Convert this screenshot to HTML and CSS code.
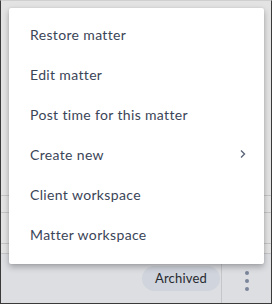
FILE: index.html
```html
<!DOCTYPE html>
<html lang="en">
<head>
    <meta charset="UTF-8">
    <title>Matter actions</title>
    <link rel="stylesheet" href="styles.css">
</head>
<body>
    <div class="frame">
        <div class="table">
            <div class="row row_top"></div>
            <div class="row row_a"></div>
            <div class="row row_b"></div>
            <div class="row row_c"></div>
            <div class="row row_last">
                <div class="cell_status">
                    <span class="pill">Archived</span>
                </div>
                <div class="cell_more">
                    <span class="kebab"><i></i><i></i><i></i></span>
                </div>
            </div>
        </div>

        <ul class="menu">
            <li><a href="#">Restore matter</a></li>
            <li><a href="#">Edit matter</a></li>
            <li><a href="#">Post time for this matter</a></li>
            <li>
                <a href="#" class="has_sub">Create new
                    <svg width="8" height="10" viewBox="0 0 8 10"><path d="M2 1.5 L5.5 5 L2 8.5" fill="none" stroke="#5b6578" stroke-width="1.4"/></svg>
                </a>
            </li>
            <li><a href="#">Client workspace</a></li>
            <li><a href="#">Matter workspace</a></li>
        </ul>
    </div>
</body>
</html>
```

FILE: styles.css
```css
*{
    padding: 0;
    margin: 0;
    box-sizing: border-box;
    font-family: Lato, 'Liberation Sans', sans-serif;
}
ul,ol{
    list-style-type: none;
}
a{
    text-decoration: none;
}
body{
    background: #fff;
}
.frame{
    position: relative;
    width: 272px;
    height: 304px;
    border: 1px solid #3a3a3a;
    border-top-color: #cfcfcf;
    background: #e3e3e3;
    overflow: hidden;
}
.table{
    display: flex;
    flex-direction: column;
    height: 100%;
}
.row{
    border-bottom: 1px solid #c6c6c6;
}
.row_top{ height: 195px; }
.row_a{ height: 17px; }
.row_b{ height: 31px; }
.row_c{ height: 10px; }
.row_last{
    flex: 1;
    display: flex;
    background: #dcdee2;
    border-bottom: 0;
}
.cell_status{
    width: 221px;
    display: flex;
    justify-content: flex-end;
    align-items: center;
    padding: 0 1px 0 0;
    border-right: 1px solid #c4c6ca;
}
.pill{
    display: inline-block;
    height: 25px;
    line-height: 25px;
    padding: 0 13px;
    border-radius: 13px;
    background: #d0d4dc;
    color: #262a30;
    font-size: 13px;
    letter-spacing: 0.2px;
}
.cell_more{
    flex: 1;
    display: flex;
    justify-content: center;
    align-items: center;
    padding-top: 4px;
}
.kebab{
    display: flex;
    flex-direction: column;
    gap: 4px;
}
.kebab i{
    display: block;
    width: 4px;
    height: 4px;
    border-radius: 50%;
    background: #7b859a;
}
.menu{
    position: absolute;
    left: 8px;
    top: 7px;
    width: 255px;
    padding: 6px 0 10px;
    background: #fff;
    border-radius: 2px;
    box-shadow: 0 3px 6px rgba(0,0,0,0.28), 0 0 2px rgba(0,0,0,0.1);
}
.menu a{
    display: flex;
    align-items: center;
    justify-content: space-between;
    height: 40px;
    padding: 0 17px 0 21px;
    font-size: 14px;
    letter-spacing: 0.35px;
    color: #3b4558;
}
```
